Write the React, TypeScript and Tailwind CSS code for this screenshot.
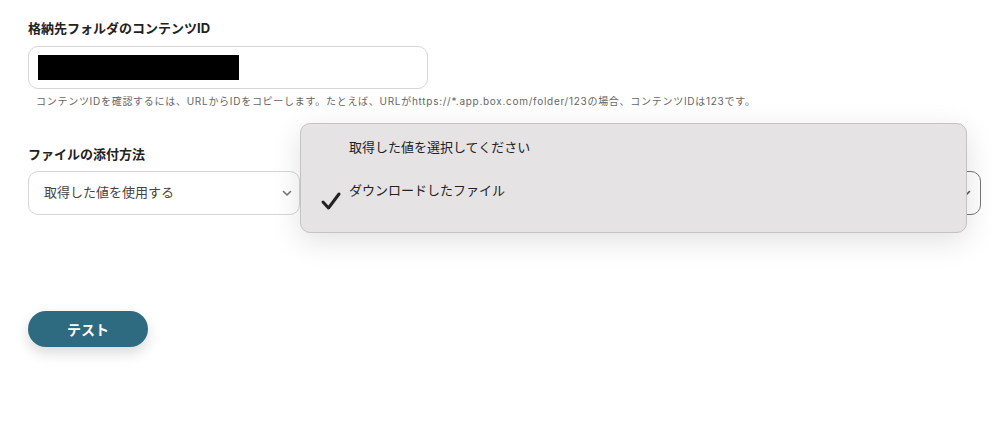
import React from "react";

const font = { fontFamily: 'Inter, "Noto Sans CJK JP", "Noto Sans", sans-serif' };

const Chevron = ({ className }: { className: string }) => (
  <svg className={className} width="12" height="12" viewBox="0 0 12 12" fill="none">
    <path d="M2.5 4.5 L6 8 L9.5 4.5" stroke="currentColor" strokeWidth="1.6" strokeLinecap="round" strokeLinejoin="round" />
  </svg>
);

const App = () => {
  return (
    <div className="relative w-[1000px] h-[432px] bg-white overflow-hidden" style={font}>
      <div className="flex flex-col pl-[28px] pt-[19px]">
        <div className="text-[13px] font-bold text-[#222] leading-[18px]">格納先フォルダのコンテンツID</div>
        <div className="mt-[9px] w-[400px] h-[43px] rounded-[10px] border border-[#d4d6da] flex items-center pl-[9px]">
          <div className="w-[201px] h-[25px] bg-black" />
        </div>
        <div className="mt-[5px] pl-[8px] text-[10px] text-[#666] leading-[14px] tracking-[0.72px] whitespace-nowrap">
          コンテンツIDを確認するには、URLからIDをコピーします。たとえば、URLがhttps://*.app.box.com/folder/123の場合、コンテンツIDは123です。
        </div>
        <div className="mt-[37px] text-[13px] font-bold text-[#222] leading-[18px]">ファイルの添付方法</div>
        <div className="mt-[8px] flex gap-[12px]">
          <div className="w-[272px] h-[44px] rounded-[10px] border border-[#d4d6da] flex items-center justify-between pl-[15px] pr-[6px]">
            <span className="text-[13px] text-[#444]">取得した値を使用する</span>
            <Chevron className="text-[#777]" />
          </div>
          <div className="w-[669px] h-[44px] rounded-[10px] border border-[#777] flex items-center justify-end pr-[8px]">
            <Chevron className="text-[#555]" />
          </div>
        </div>
        <div className="mt-[96px]">
          <button className="w-[120px] h-[36px] rounded-full bg-[#2e6a80] text-white text-[14px] font-bold shadow-[0_6px_14px_rgba(0,0,0,0.15)]">
            テスト
          </button>
        </div>
      </div>

      <div className="absolute left-[300px] top-[123px] w-[667px] h-[110px] rounded-[10px] border border-[#c4c4c4] bg-[#e5e3e4] shadow-[0_8px_30px_rgba(0,0,0,0.12)]">
        <div className="absolute left-[48px] top-[14px] text-[13px] text-[#222] leading-[18px]">取得した値を選択してください</div>
        <svg className="absolute left-[19px] top-[66px]" width="22" height="22" viewBox="0 0 22 22" fill="none">
          <path d="M3 12 L8.5 18 L19 4" stroke="#222" strokeWidth="3" strokeLinecap="round" strokeLinejoin="round" />
        </svg>
        <div className="absolute left-[48px] top-[57px] text-[13px] text-[#222] leading-[18px]">ダウンロードしたファイル</div>
      </div>
    </div>
  );
};

export default App;
